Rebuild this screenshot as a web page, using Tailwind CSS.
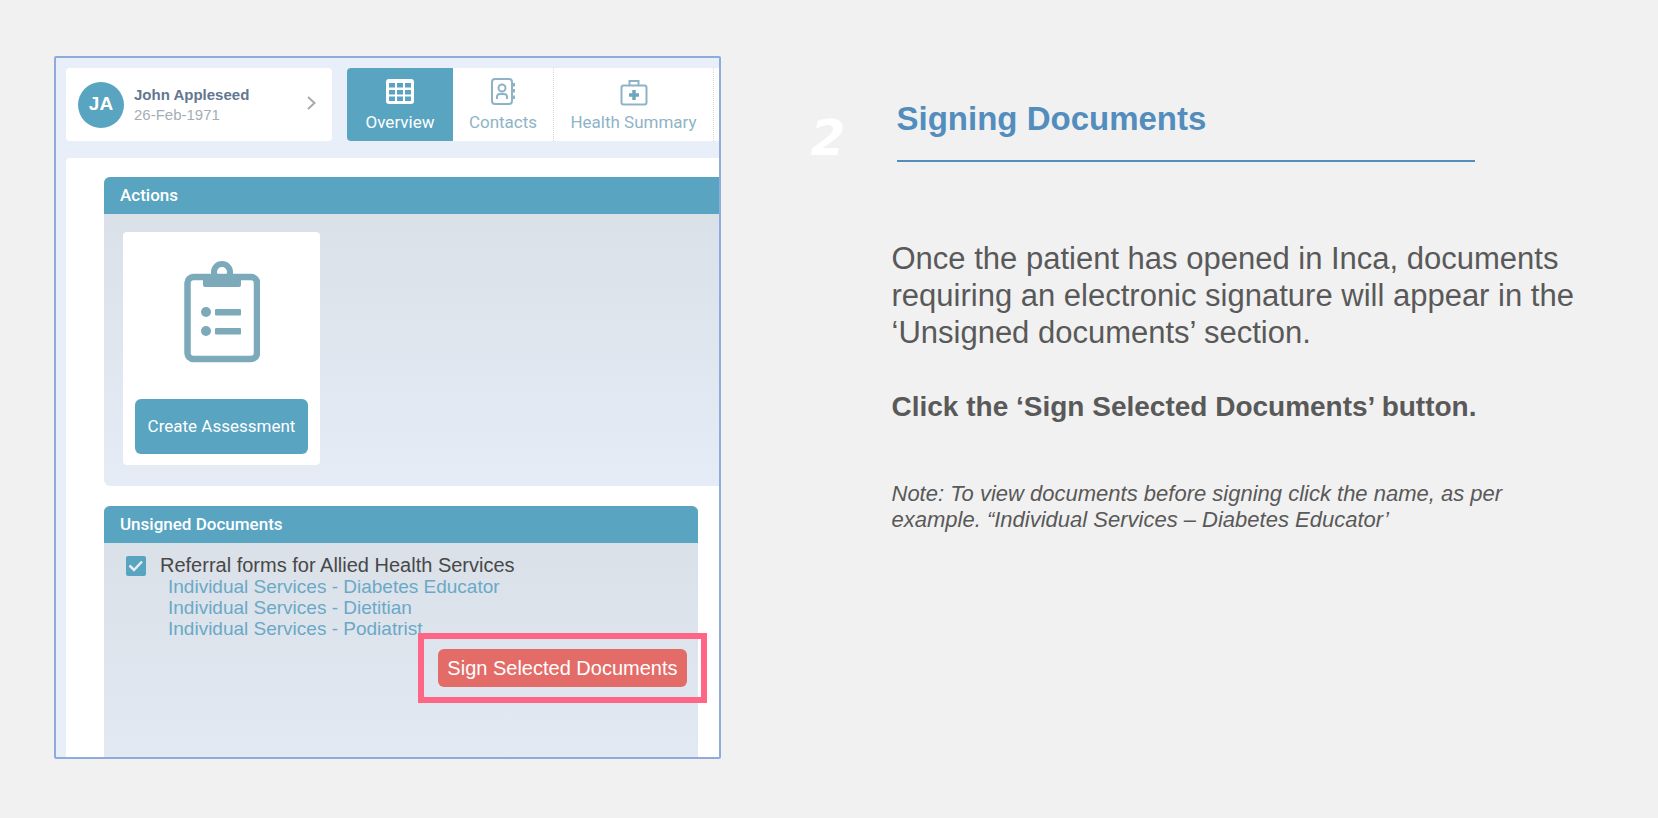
<!DOCTYPE html>
<html lang="en">
<head>
    <meta charset="UTF-8">
    <meta name="viewport" content="width=device-width, initial-scale=1.0">
    <title>Signing Documents</title>
    <script src="https://cdn.jsdelivr.net/npm/@tailwindcss/browser@4"></script>
</head>
<body class="min-h-screen bg-[#f1f1f1] font-['Liberation_Sans',Arial,sans-serif]">
    <main class="flex items-start px-[54px] py-14">

        <!-- Patient record -->
        <section class="w-[43%] shrink-0 overflow-hidden rounded-xs border-2 border-[#8faadc] bg-[#e9eff8] pt-[10px] pl-[10px]">
            <header class="flex gap-[15px]">
                <button type="button" class="flex h-[73px] w-[266px] shrink-0 items-center rounded-sm bg-white pr-4 pl-3 text-left">
                    <span class="flex size-[46px] items-center justify-center rounded-full bg-[#58a4c1] text-[19px] font-bold text-white">JA</span>
                    <span class="ml-[10px] flex-1 text-[15px] leading-5">
                        <span class="block font-bold text-[#62778f]">John Appleseed</span>
                        <span class="block text-[#a6adb5]">26-Feb-1971</span>
                    </span>
                    <svg class="mb-1 h-4 w-[9px]" viewBox="0 0 9 16" fill="none" stroke="#a9a9a9" stroke-width="2"><path d="M1 2l6.500 6L1 14"/></svg>
                </button>

                <nav class="flex h-[73px] flex-1 overflow-hidden rounded-l-sm bg-white font-[Roboto,sans-serif] text-[17px] leading-5 text-[#8fb3c6]">
                    <a href="#" class="flex w-[106px] shrink-0 flex-col items-center gap-1 bg-[#58a4c1] pt-[10px] text-white">
                        <svg class="h-[30px] w-[28px]" viewBox="0 0 28 30">
                            <rect x="0" y="1" width="28" height="25" rx="3" fill="#fff"/>
                            <path fill="#58a4c1" d="M3 5h6v4.500H3zM11 5h6v4.500h-6zM19 5h6v4.500h-6zM3 12h6v4.500H3zM11 12h6v4.500h-6zM19 12h6v4.500h-6zM3 18.500h6V23H3zM11 18.500h6V23h-6zM19 18.500h6V23h-6z"/>
                        </svg>
                        Overview
                    </a>
                    <a href="#" class="flex w-[101px] shrink-0 flex-col items-center gap-1 border-r border-dotted border-[#cfd6dc] pt-[10px]">
                        <svg class="h-[30px] w-[26px]" viewBox="0 0 26 30" fill="none" stroke="#8fb3c6" stroke-width="2">
                            <rect x="2" y="1" width="20" height="25" rx="3"/>
                            <circle cx="12" cy="10" r="3.500"/>
                            <path d="M7 21v-2q0-3 3-3h4q3 0 3 3v2"/>
                            <path stroke-width="3" d="M23.500 5v3.500M23.500 11v3.500M23.500 17.500V21"/>
                        </svg>
                        Contacts
                    </a>
                    <a href="#" class="flex w-[160px] shrink-0 flex-col items-center gap-1 border-r border-dotted border-[#cfd6dc] pt-[10px]">
                        <svg class="h-[30px] w-[28px]" viewBox="0 0 28 30" fill="none" stroke="#8fb3c6" stroke-width="2">
                            <rect x="1.500" y="7.500" width="25" height="19" rx="2"/>
                            <path d="M9.500 7.500V3h9v4.500"/>
                            <path stroke="#6fa6bd" stroke-width="3.500" d="M14 12v10M9 17h10"/>
                        </svg>
                        Health Summary
                    </a>
                </nav>
            </header>

            <div class="mt-[17px] rounded-tl-sm bg-white pt-[19px] pl-[38px]">
                <section class="overflow-hidden rounded-l-md bg-linear-to-b from-[#d9dfe7] to-[#e6ecf5]">
                    <h2 class="bg-[#58a4c1] px-4 font-[Roboto,sans-serif] text-[17px] leading-[37px] font-medium text-white">Actions</h2>
                    <div class="px-[19px] pt-[18px] pb-[21px]">
                        <div class="flex h-[233px] w-[197px] flex-col items-center justify-between rounded-sm bg-white px-3 pt-[29px] pb-[11px]">
                            <svg class="h-[102px] w-[76px]" viewBox="0 0 76 102">
                                <rect x="3.500" y="16" width="69.500" height="82" rx="6" fill="none" stroke="#7caabb" stroke-width="6.500"/>
                                <path fill="#7caabb" fill-rule="evenodd" d="M19 13h8v-2a11 11 0 0 1 22 0v2h8v11q0 2-2 2H21q-2 0-2-2zM38 6a5 5 0 1 0 0 10a5 5 0 1 0 0-10z"/>
                                <circle cx="22" cy="51" r="5" fill="#7caabb"/>
                                <circle cx="22" cy="70" r="5" fill="#7caabb"/>
                                <rect x="31" y="48" width="26" height="6.500" rx="1" fill="#7caabb"/>
                                <rect x="31" y="67" width="26" height="6.500" rx="1" fill="#7caabb"/>
                            </svg>
                            <button type="button" class="h-[55px] w-full rounded-md bg-[#58a4c1] font-[Roboto,sans-serif] text-[17px] text-white">Create Assessment</button>
                        </div>
                    </div>
                </section>

                <section class="mt-5 mr-[21px] rounded-t-md bg-linear-to-b from-[#d9dfe7] to-[#e3e9f2]">
                    <h2 class="rounded-t-md bg-[#58a4c1] px-4 font-[Roboto,sans-serif] text-[17px] leading-[37px] font-medium text-white">Unsigned Documents</h2>
                    <div class="min-h-[214px] pt-3 pr-[11px] pl-[22px]">
                        <div class="flex items-center gap-[14px]">
                            <span class="relative size-5 shrink-0">
                                <input id="referrals" type="checkbox" checked class="block size-5 appearance-none rounded-xs bg-[#58a4c1]">
                                <svg class="pointer-events-none absolute inset-0 size-5" viewBox="0 0 20 20" fill="none" stroke="#e6edf3" stroke-width="2.500"><path d="M3.500 9.500l4.500 4.500l8-8.500"/></svg>
                            </span>
                            <label for="referrals" class="text-[20px] leading-[21px] whitespace-nowrap text-[#484848]">Referral forms for Allied Health Services</label>
                        </div>
                        <ul class="pl-[42px] text-[19px] leading-[21px] text-[#6aa9c6]">
                            <li><a href="#">Individual Services - Diabetes Educator</a></li>
                            <li><a href="#">Individual Services - Dietitian</a></li>
                            <li><a href="#">Individual Services - Podiatrist</a></li>
                        </ul>
                        <div class="mt-[10px] flex justify-end">
                            <div class="relative">
                                <button type="button" class="h-[38px] rounded-md bg-[#e36c68] px-[9px] text-[20px] whitespace-nowrap text-white">Sign Selected Documents</button>
                                <!-- highlight -->
                                <div class="pointer-events-none absolute -inset-x-5 -inset-y-4 border-6 border-[#ff6685]"></div>
                            </div>
                        </div>
                    </div>
                </section>
            </div>
        </section>

        <!-- Instructions -->
        <article class="flex min-w-0 flex-1 text-[#595959]">
            <div class="w-[171px] shrink-0 pt-[52px] pl-[90px] font-['DejaVu_Sans',sans-serif] text-[50px] leading-[60px] font-bold text-white italic">2</div>
            <div class="flex-1 pt-[42px]">
                <h1 class="mr-[129px] ml-[5px] border-b-2 border-[#528dbd] pb-[21px] text-[33px] leading-[41px] font-bold text-[#528dbd]">Signing Documents</h1>
                <p class="mt-[78px] text-[31px] leading-[37px]">Once the patient has opened in Inca, documents requiring an electronic signature will appear in the ‘Unsigned documents’ section.</p>
                <p class="mt-[37px] text-[28px] leading-[37px] font-bold">Click the ‘Sign Selected Documents’ button.</p>
                <p class="mt-[56px] mr-[60px] text-[22px] leading-[26px] italic">Note: To view documents before signing click the name, as per example. “Individual Services – Diabetes Educator’</p>
            </div>
        </article>
    </main>
</body>
</html>
